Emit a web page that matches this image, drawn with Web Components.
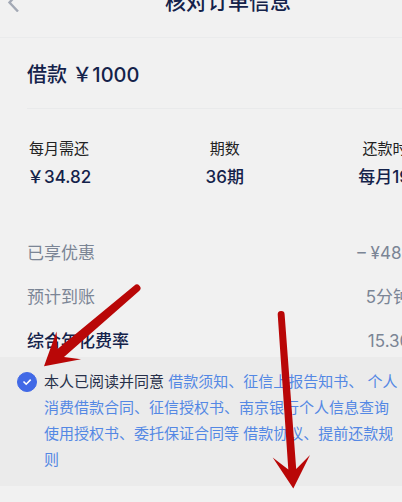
<!DOCTYPE html>
<html lang="zh-CN">
<head>
<meta charset="utf-8">
<meta name="viewport" content="width=device-width, initial-scale=1">
<title>核对订单信息</title>
<style>
	html {
		background: #f1f1f1;
	}
	body {
		margin: 0;
		font-family: Inter, "Noto Sans CJK SC", sans-serif;
		color: #14224a;
	}
</style>
</head>
<body>
<order-page>
	<order-header slot="header">核对订单信息</order-header>
	<loan-amount>借款 ￥1000</loan-amount>
	<loan-plan>
		<plan-item label="每月需还">￥34.82</plan-item>
		<plan-item label="期数">36期</plan-item>
		<plan-item label="还款时间">每月19日</plan-item>
	</loan-plan>
	<detail-list>
		<detail-row label="已享优惠">– ¥48.00</detail-row>
		<detail-row label="预计到账">5分钟内</detail-row>
		<detail-row label="综合年化费率" strong>15.30%</detail-row>
	</detail-list>
	<loan-agreement slot="footer"></loan-agreement>
	<hint-arrows slot="overlay"></hint-arrows>
</order-page>

<script>
class OrderPage
extends HTMLElement
{
	constructor ()
	{
		super();
		this.attachShadow({mode:"open"});
		this.shadowRoot.innerHTML = `
			<style>
				:host {
					display: block;
					position: relative;
					overflow: hidden;
					min-height: 100vh;
				}
				/* the sheet runs on past the right edge of the view */
				.sheet {
					width: calc(100% + 54px);
				}
				main {
					padding: 0 29px 0 27px;
				}
			</style>
			<div class="sheet">
				<slot name="header"></slot>
				<main><slot></slot></main>
				<slot name="footer"></slot>
			</div>
			<slot name="overlay"></slot>
		`;
	}
}
customElements.define("order-page", OrderPage);

class OrderHeader
extends HTMLElement
{
	constructor ()
	{
		super();
		this.attachShadow({mode:"open"});
		this.shadowRoot.innerHTML = `
			<style>
				:host {
					display: grid;
					grid-template-columns: 32px 1fr 32px;
					align-items: center;
					box-sizing: border-box;
					height: 72px;
					/* scrolled partly out of view */
					margin-top: -34px;
					border-bottom: 1px solid #eaebec;
				}
				button {
					display: flex;
					padding: 0 0 0 7px;
					border: 0;
					background: none;
					color: #a3a9b5;
				}
				h1 {
					margin: 0;
					font-size: 21px;
					font-weight: 500;
					line-height: 28px;
					text-align: center;
				}
			</style>
			<button type="button" aria-label="返回">
				<svg width="12" height="20" viewBox="0 0 12 20" fill="none" stroke="currentColor" stroke-width="2.4">
					<path d="M11 1 L2.5 10.5 L11 19.5"/>
				</svg>
			</button>
			<h1><slot></slot></h1>
		`;
	}
}
customElements.define("order-header", OrderHeader);

class LoanAmount
extends HTMLElement
{
	constructor ()
	{
		super();
		this.attachShadow({mode:"open"});
		this.shadowRoot.innerHTML = `
			<style>
				:host {
					display: block;
					padding: 22px 0 18px;
					border-bottom: 1px solid #e9eaeb;
				}
				h2 {
					margin: 0;
					font-size: 20px;
					font-weight: 500;
					line-height: 30px;
				}
			</style>
			<h2><slot></slot></h2>
		`;
	}
}
customElements.define("loan-amount", LoanAmount);

class LoanPlan
extends HTMLElement
{
	constructor ()
	{
		super();
		this.attachShadow({mode:"open"});
		this.shadowRoot.innerHTML = `
			<style>
				:host {
					display: flex;
					justify-content: space-between;
					padding: 26px 0 48px;
				}
			</style>
			<slot></slot>
		`;
	}
}
customElements.define("loan-plan", LoanPlan);

class PlanItem
extends HTMLElement
{
	constructor ()
	{
		super();
		this.attachShadow({mode:"open"});
		this.shadowRoot.innerHTML = `
			<style>
				:host {
					display: flex;
					flex-direction: column;
					align-items: center;
				}
				.label {
					font-size: 15px;
					line-height: 28px;
					color: #222;
				}
				.value {
					font-size: 17px;
					font-weight: 500;
					line-height: 28px;
				}
			</style>
			<span class="label"></span>
			<span class="value"><slot></slot></span>
		`;
		this.shadowRoot.querySelector(".label").textContent = this.getAttribute("label");
	}
}
customElements.define("plan-item", PlanItem);

class DetailList
extends HTMLElement
{
	constructor ()
	{
		super();
		this.attachShadow({mode:"open"});
		this.shadowRoot.innerHTML = `
			<style>
				:host {
					display: flex;
					flex-direction: column;
					gap: 16px;
					padding-bottom: 2px;
				}
			</style>
			<slot></slot>
		`;
	}
}
customElements.define("detail-list", DetailList);

class DetailRow
extends HTMLElement
{
	constructor ()
	{
		super();
		this.attachShadow({mode:"open"});
		this.shadowRoot.innerHTML = `
			<style>
				:host {
					display: flex;
					justify-content: space-between;
					font-size: 17px;
					line-height: 28px;
					color: #7b8595;
				}
				:host([strong]) .label {
					font-weight: 500;
					color: #14224a;
				}
			</style>
			<span class="label"></span>
			<span><slot></slot></span>
		`;
		this.shadowRoot.querySelector(".label").textContent = this.getAttribute("label");
	}
}
customElements.define("detail-row", DetailRow);

class LoanAgreement
extends HTMLElement
{
	constructor ()
	{
		super();
		this.attachShadow({mode:"open"});
		this.shadowRoot.innerHTML = `
			<style>
				:host {
					display: grid;
					grid-template-columns: 20px 1fr;
					gap: 7px;
					padding: 12px 54px 13px 17px;
					background: #ebebeb;
					font-size: 15px;
					line-height: 26px;
				}
				.check {
					display: grid;
					place-items: center;
					height: 26px;
				}
				.check > * {
					grid-area: 1 / 1;
				}
				input {
					appearance: none;
					width: 20px;
					height: 20px;
					margin: 0;
					border: 1px solid #4169e6;
					border-radius: 50%;
				}
				input:checked {
					background: #4169e6;
				}
				input:not(:checked) + svg {
					display: none;
				}
				svg {
					pointer-events: none;
				}
				p {
					margin: 0;
					color: #5488e4;
				}
				label {
					color: #27304a;
				}
				a {
					color: inherit;
					text-decoration: none;
				}
			</style>
			<span class="check">
				<input type="checkbox" id="agree" checked>
				<svg width="10" height="8" viewBox="0 0 10 8" fill="none" stroke="#fff" stroke-width="1.6">
					<path d="M1.5 3.5 L4.2 6.2 L8.7 1.6"/>
				</svg>
			</span>
			<p><label for="agree">本人已阅读并同意</label> <a href="#">借款须知</a>、<a href="#">征信上报告知书</a>、 <a href="#">个人消费借款合同</a>、<a href="#">征信授权书</a>、<a href="#">南京银行个人信息查询使用授权书</a>、<a href="#">委托保证合同等</a> <a href="#">借款协议</a>、<a href="#">提前还款规则</a></p>
		`;
	}
}
customElements.define("loan-agreement", LoanAgreement);

// red arrows pointing at the tick box and below the agreement
class HintArrows
extends HTMLElement
{
	constructor ()
	{
		super();
		this.attachShadow({mode:"open"});
		this.shadowRoot.innerHTML = `
			<style>
				:host {
					position: absolute;
					top: 0;
					left: 0;
					pointer-events: none;
				}
				svg {
					display: block;
				}
			</style>
			<svg width="402" height="502" viewBox="0 0 402 502" fill="#b90707">
				<path d="M134.4 285.6 A3.5 3.5 0 0 1 139.4 290.7 L64 357 L81 359.3 L44 366.3 L56.5 331.5 L57.5 349 Z"/>
				<path d="M277.7 314.5 A3.4 3.4 0 0 1 284.6 314.2 L296.2 469 L310 455 L293.3 488.5 L272.7 457.5 L288.3 469.5 Z"/>
			</svg>
		`;
	}
}
customElements.define("hint-arrows", HintArrows);
</script>
</body>
</html>
